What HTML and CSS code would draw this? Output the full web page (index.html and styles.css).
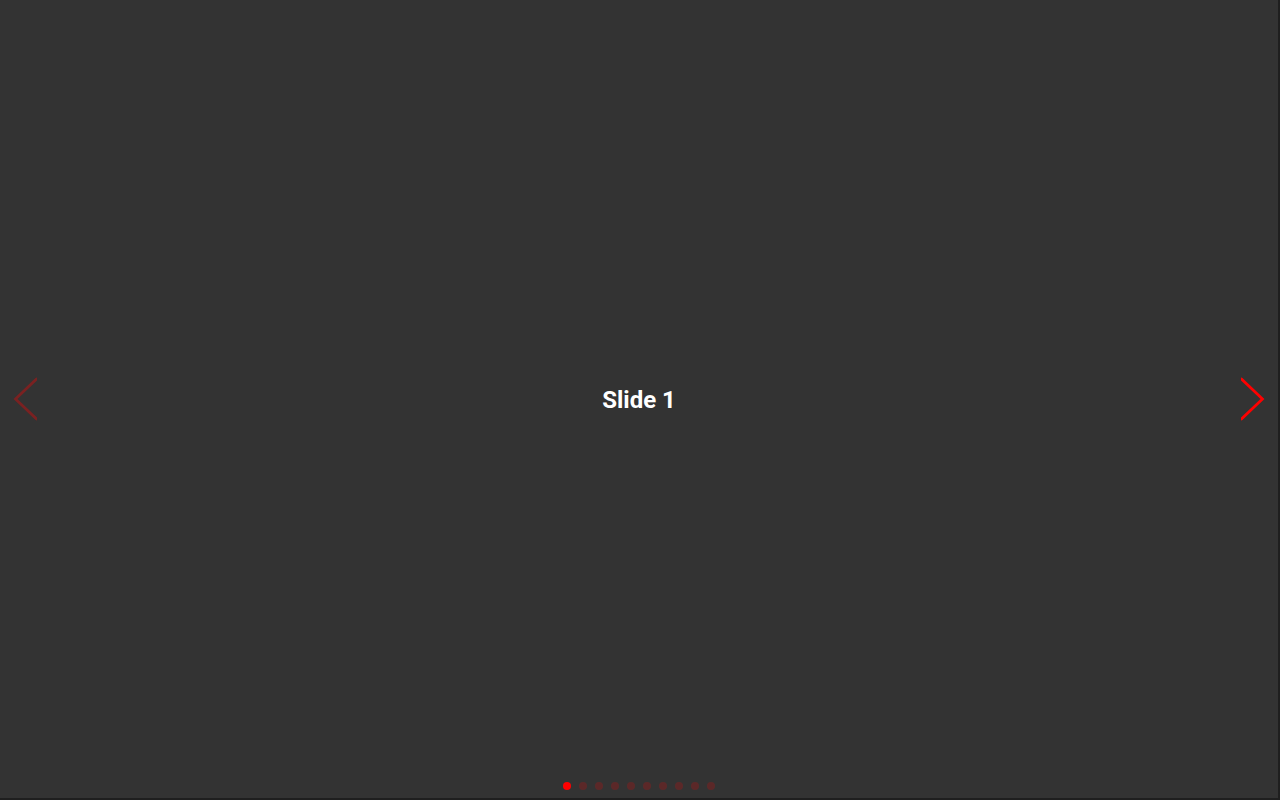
FILE: index.html
```html
<!DOCTYPE html>
<html lang="en">
<head>
<meta charset="utf-8">
<title>Slider</title>
<link rel="stylesheet" href="styles.css">
</head>
<body>
<div class="swiper">
  <div class="slide">Slide 1</div>
  <button class="nav nav-prev disabled" aria-label="Previous slide">
    <svg viewBox="0 0 27 44" width="27" height="44"><polyline points="26.5,2 5.5,22 26.5,42" /></svg>
  </button>
  <button class="nav nav-next" aria-label="Next slide">
    <svg viewBox="0 0 27 44" width="27" height="44"><polyline points="0.5,2 21.5,22 0.5,42" /></svg>
  </button>
  <div class="pagination">
    <span class="bullet active"></span>
    <span class="bullet"></span>
    <span class="bullet"></span>
    <span class="bullet"></span>
    <span class="bullet"></span>
    <span class="bullet"></span>
    <span class="bullet"></span>
    <span class="bullet"></span>
    <span class="bullet"></span>
    <span class="bullet"></span>
  </div>
</div>
</body>
</html>
```
FILE: styles.css
```css
html, body {
  margin: 0;
  padding: 0;
  background: #1f1f1f;
  width: 100%;
  height: 100%;
  overflow: hidden;
}

.swiper {
  position: relative;
  width: 1278px;
  height: 798px;
  background: #333333;
  overflow: hidden;
}

.slide {
  box-sizing: border-box;
  width: 100%;
  height: 100%;
  padding-top: 2px;
  display: flex;
  align-items: center;
  justify-content: center;
  color: #ffffff;
  font-family: Roboto, "Liberation Sans", sans-serif;
  font-weight: 700;
  font-size: 24px;
}

.nav {
  position: absolute;
  top: 50%;
  margin-top: -22px;
  width: 27px;
  height: 44px;
  padding: 0;
  border: 0;
  background: none;
  display: flex;
  align-items: center;
  justify-content: center;
  cursor: pointer;
}

.nav svg {
  display: block;
  fill: none;
  stroke: #ff0000;
  stroke-width: 2.7;
  stroke-linecap: round;
  stroke-linejoin: miter;
}

.nav-prev {
  left: 10px;
}

.nav-next {
  right: 10px;
}

.nav.disabled {
  opacity: 0.35;
}

.pagination {
  position: absolute;
  left: 0;
  right: 0;
  bottom: 8px;
  display: flex;
  justify-content: center;
  line-height: 0;
}

.bullet {
  width: 8px;
  height: 8px;
  margin: 0 4px;
  border-radius: 50%;
  background: #ff0000;
  opacity: 0.2;
}

.bullet.active {
  opacity: 1;
}
```
